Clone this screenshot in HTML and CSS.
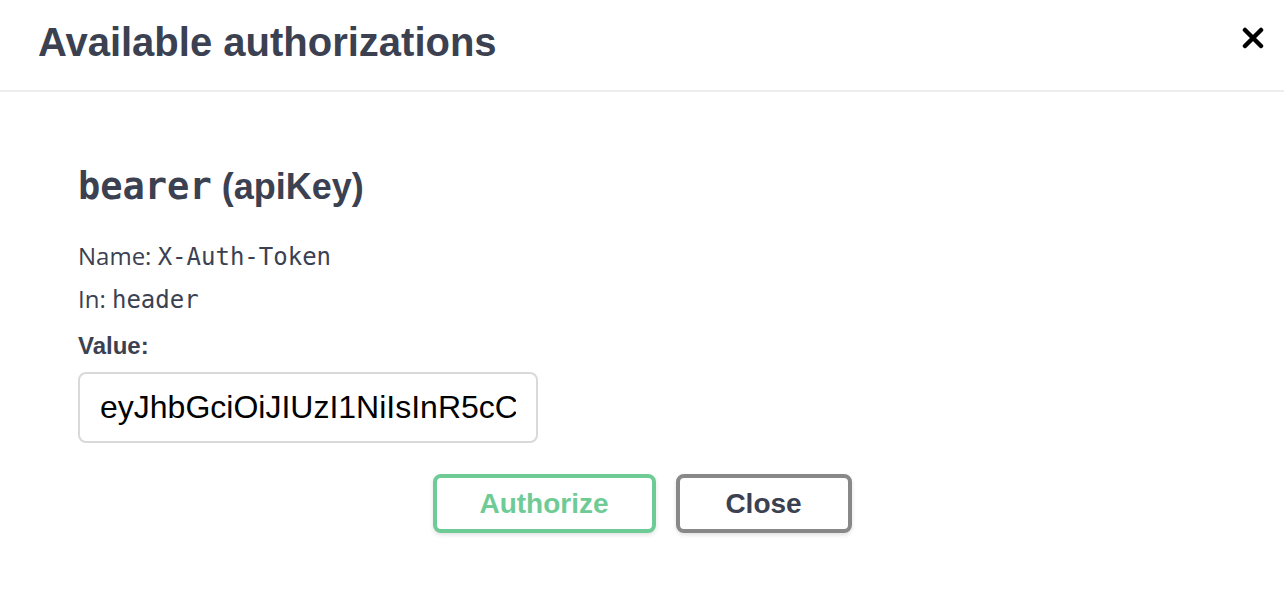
FILE: index.html
```html
<!DOCTYPE html>
<html>
<head>
<meta charset="utf-8">
<link rel="stylesheet" href="styles.css">
</head>
<body>
<div class="modal">
  <div class="modal-header">
    <h3 class="title">Available authorizations</h3>
    <button class="close-x" aria-label="Close">
      <svg width="22" height="22" viewBox="0 0 22 22"><path d="M3 3 L19 19 M19 3 L3 19" stroke="#000" stroke-width="4.5" stroke-linecap="round"/></svg>
    </button>
  </div>
  <div class="modal-body">
    <div class="auth-block">
      <h4 class="scheme"><code class="mono">bearer</code> (apiKey)</h4>
      <p class="meta">Name: <code class="mono">X-Auth-Token</code></p>
      <p class="meta">In: <code class="mono">header</code></p>
      <label class="value-label">Value:</label>
      <div class="input-wrap"><input class="value-input" type="text" value="eyJhbGciOiJIUzI1NiIsInR5cC"></div>
    </div>
    <div class="buttons">
      <button class="btn authorize">Authorize</button>
      <button class="btn close">Close</button>
    </div>
  </div>
</div>
</body>
</html>
```

FILE: styles.css
```css
html, body {
  margin: 0;
  padding: 0;
  background: #fff;
}
body {
  font-family: "Liberation Sans", Arial, sans-serif;
  color: #3b4151;
}
.modal {
  width: 1284px;
  height: 608px;
  display: flex;
  flex-direction: column;
}
.modal-header {
  height: 92px;
  box-sizing: border-box;
  border-bottom: 2px solid #ededed;
  display: flex;
  align-items: center;
  justify-content: space-between;
  padding: 0 20px 0 38px;
}
.title {
  margin: 0;
  font-size: 40px;
  font-weight: 700;
  color: #3b4151;
  padding-bottom: 6px;
}
.close-x {
  background: none;
  border: 0;
  padding: 0;
  width: 22px;
  height: 22px;
  margin-bottom: 14px;
  display: flex;
}
.modal-body {
  padding: 0 78px;
  display: flex;
  flex-direction: column;
}
.auth-block {
  display: flex;
  flex-direction: column;
  align-items: flex-start;
  padding-top: 65px;
}
.scheme {
  margin: 0;
  font-size: 36px;
  font-weight: 700;
  line-height: 60px;
  color: #3b4151;
}
.mono {
  font-family: "DejaVu Sans Mono", "Liberation Mono", monospace;
  font-weight: 600;
}
.scheme .mono {
  font-size: 37px;
}
.meta {
  margin: 0;
  font-family: "Open Sans", "Noto Sans", sans-serif;
  font-size: 24px;
  line-height: 41px;
  color: #3b4151;
}
.meta .mono {
  font-weight: 400;
  font-size: 24px;
}
.scheme + .meta {
  margin-top: 18px;
}
.value-label {
  margin-top: 9px;
  font-size: 24px;
  font-weight: 700;
  line-height: 32px;
  color: #3b4151;
}
.input-wrap {
  margin-top: 10px;
}
.value-input {
  box-sizing: border-box;
  width: 460px;
  height: 71px;
  border: 2px solid #d9d9d9;
  border-radius: 8px;
  padding: 0 20px;
  font-family: "Liberation Sans", Arial, sans-serif;
  font-size: 32px;
  color: #000;
  background: #fff;
  outline: none;
}
.buttons {
  display: flex;
  justify-content: center;
  gap: 20px;
  margin-top: 31px;
}
.btn {
  box-sizing: border-box;
  height: 59px;
  border-radius: 8px;
  background: #fff;
  font-family: "Liberation Sans", Arial, sans-serif;
  font-size: 28px;
  font-weight: 700;
  box-shadow: 0 2px 4px rgba(0,0,0,0.12);
}
.authorize {
  width: 223px;
  border: 4px solid #6fcb95;
  color: #6fcb95;
}
.close {
  width: 176px;
  border: 4px solid #888;
  color: #3b4151;
}
```
